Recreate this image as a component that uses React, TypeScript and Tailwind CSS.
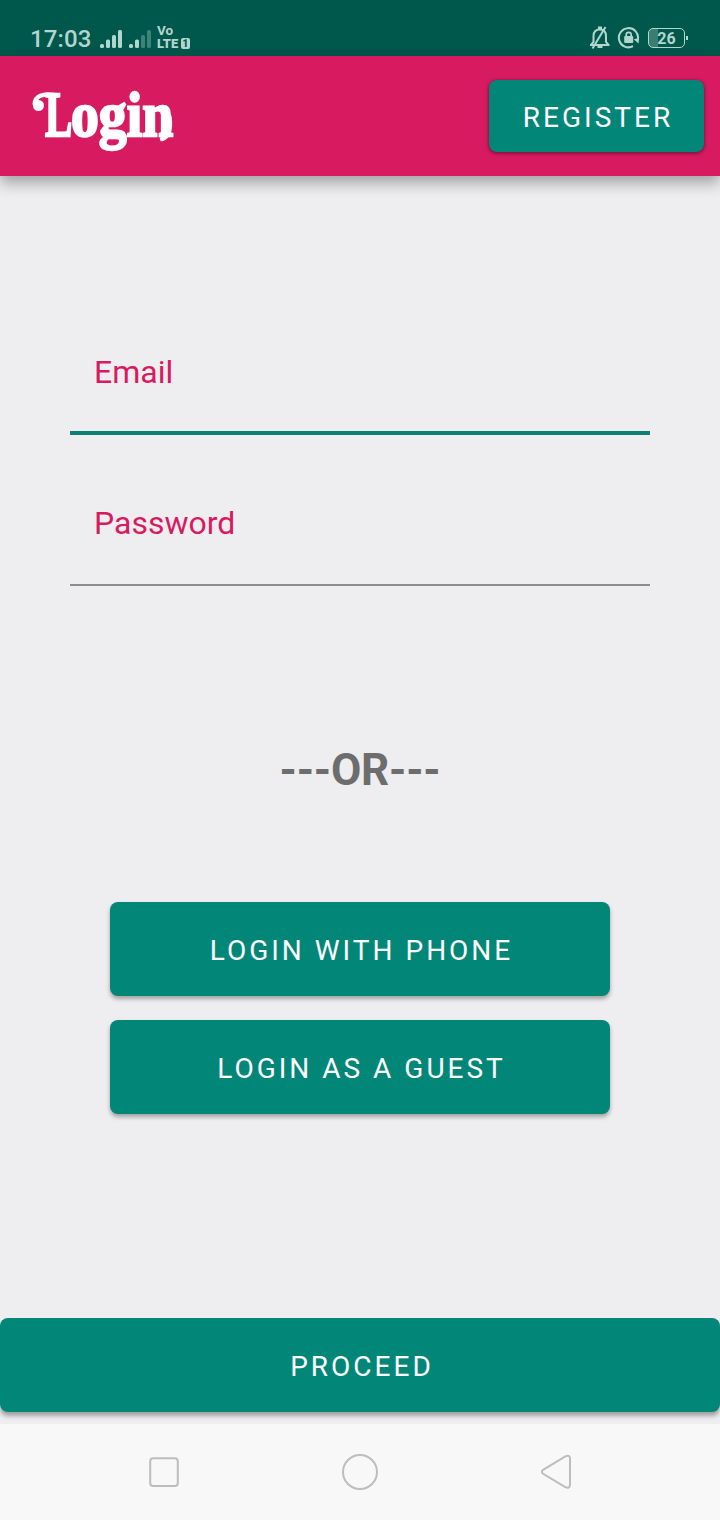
import React from "react";

const BUTTON =
  "flex items-center justify-center rounded-[8px] bg-[#028678] font-normal text-[28px] leading-[32px] tracking-[3px] text-white";

function StatusBar() {
  return (
    <header className="flex h-14 shrink-0 items-start justify-between bg-[#00574b] text-[#b2d5ce]">
      <div className="flex items-start pl-[30px]">
        <span className="mt-[25px] w-[70px] text-[24px] font-medium leading-7 tracking-[0.1px]">17:03</span>
        <svg className="mt-[28px]" width="52" height="20" viewBox="0 0 52 20" fill="currentColor">
          <rect x="0" y="16" width="4" height="4" rx="1.5" />
          <rect x="6" y="11.5" width="4" height="8.5" rx="1.5" />
          <rect x="12" y="7" width="4" height="13" rx="1.5" />
          <rect x="18" y="2" width="4" height="18" rx="1.5" />
          <rect x="29" y="16" width="4" height="4" rx="1.5" />
          <rect x="35" y="11.5" width="4" height="8.5" rx="1.5" />
          <g opacity="0.35">
            <rect x="41" y="7" width="4" height="13" rx="1.5" />
            <rect x="47" y="2" width="4" height="18" rx="1.5" />
          </g>
        </svg>
        <div className="ml-[5px] mt-[24px] text-[13.5px] font-black leading-[13px]">
          <div className="font-bold">Vo</div>
          <div className="flex items-center">
            <span className="w-[24px] origin-left scale-x-[0.96]">LTE</span>
            <span className="flex h-[11px] w-[9px] items-center justify-center rounded-[2px] bg-[#b2d5ce] text-[10px] leading-[11px] text-[#00574b]">
              1
            </span>
          </div>
        </div>
      </div>
      <div className="flex pr-[32px] pt-[25px]">
        <svg width="24" height="26" viewBox="0 0 24 26" fill="none" stroke="currentColor" strokeWidth="2">
          <path d="M2 20H21.5M3 19.8L5.5 16.8V11C5.5 6.8 7.8 4.4 11.8 4.4S18 6.8 18 11V16.8L20.5 19.8" />
          <path d="M11 4V2.6H13V4M9.5 22H14.5" />
          <path d="M17.5 2L4.5 23.5" />
        </svg>
        <svg className="ml-[5px]" width="24" height="26" viewBox="0 0 24 26">
          <path d="M16 21.2A9.6 9.6 0 1 1 21 14" fill="none" stroke="currentColor" strokeWidth="2" />
          <path d="M16.8 14.2L22 13L21.6 18.4Z" fill="currentColor" />
          <rect x="7.2" y="11" width="9" height="7" rx="1" fill="currentColor" />
          <path d="M9.2 12V9.8A2.5 2.5 0 0 1 14.2 9.8V12" fill="none" stroke="currentColor" strokeWidth="1.7" />
        </svg>
        <div className="ml-[7px] mt-[3px] flex h-5 items-center">
          <div className="flex h-5 w-[37px] items-center justify-center rounded-[5px] border border-[#b2d5ce] bg-[linear-gradient(90deg,#397d73_0,#397d73_9px,transparent_9px)] pt-px text-[16px] font-bold leading-none">
            26
          </div>
          <div className="ml-[1px] h-[4px] w-[2px] bg-[#b2d5ce]" />
        </div>
      </div>
    </header>
  );
}

function Wordmark() {
  return (
    <h1 className="relative ml-8 flex h-[80px] w-[150px] pl-[13px] font-['Liberation_Serif',serif] text-[64px] font-bold leading-[77px] text-white [-webkit-text-stroke:2.4px_white]">
      <span className="w-[26px] origin-left scale-x-[0.64]">L</span>
      <span className="w-[104px] origin-left scale-x-[0.87]">ogin</span>
      <svg className="absolute left-0 top-[15px]" width="150" height="54" viewBox="0 0 150 54" fill="none" stroke="white" strokeLinecap="round">
        <path d="M2.8 13C3 5 11 2 22 4" strokeWidth="4.5" />
        <circle cx="6.5" cy="14.5" r="5.5" fill="white" stroke="none" />
        <path d="M137.5 26C139 39 137 46 130 48" strokeWidth="4.5" />
      </svg>
    </h1>
  );
}

function Field({ label, active }: { label: string; active?: boolean }) {
  return (
    <label
      className={
        active
          ? "flex h-[112px] items-start border-b-4 border-[#0d8073] pl-6 pt-[29px]"
          : "flex h-[111px] items-start border-b-2 border-[#8d8d8f] pl-6 pt-[28px]"
      }
    >
      <span className="text-[32px] leading-10 text-[#d81b60]">{label}</span>
    </label>
  );
}

export default function App() {
  return (
    <div className="flex h-[1520px] w-[720px] flex-col overflow-hidden bg-[#eeeef0] font-[Roboto,sans-serif]">
      <StatusBar />
      <nav className="flex h-[120px] shrink-0 items-center justify-between bg-[#d81b60] pr-4 shadow-[0_7px_14px_rgba(0,0,0,0.32)]">
        <Wordmark />
        <button className={`${BUTTON} h-[72px] w-[215px] pl-[3px] pt-[3px] shadow-[0_1px_4px_rgba(0,0,0,0.55)]`}>REGISTER</button>
      </nav>
      <main className="flex grow flex-col">
        <form className="mt-[147px] flex flex-col gap-10 px-[70px]">
          <Field label="Email" active />
          <Field label="Password" />
        </form>
        <p className="mt-[156px] text-center text-[44px] font-bold leading-[56px] tracking-[-0.2px] text-[#6d6d6d]">---OR---</p>
        <div className="mt-[104px] flex flex-col gap-6 px-[110px]">
          <button className={`${BUTTON} h-[94px] pl-[3px] pt-[3px] shadow-[0_3px_4px_rgba(0,0,0,0.32)]`}>LOGIN WITH PHONE</button>
          <button className={`${BUTTON} h-[94px] pl-[3px] pt-[3px] shadow-[0_3px_4px_rgba(0,0,0,0.32)]`}>LOGIN AS A GUEST</button>
        </div>
        <button className={`${BUTTON} mb-3 mt-auto h-[94px] pl-[4px] pt-[3px] shadow-[0_4px_4px_rgba(0,0,0,0.32)]`}>PROCEED</button>
      </main>
      <footer className="flex h-24 shrink-0 items-center justify-between bg-[#f8f8f8] px-[144px]">
        <svg width="40" height="40" viewBox="0 0 40 40" fill="none" stroke="#bdbdbd" strokeWidth="2">
          <rect x="6.2" y="6.3" width="27.6" height="27.6" rx="3" />
        </svg>
        <svg width="40" height="40" viewBox="0 0 40 40" fill="none" stroke="#bdbdbd" strokeWidth="2">
          <circle cx="20" cy="20" r="17" />
        </svg>
        <svg width="40" height="40" viewBox="0 0 40 40" fill="none" stroke="#bdbdbd" strokeWidth="2">
          <path d="M7.1 17.8L29.3 4.4Q33.8 2.4 34 6.4V32.9Q33.8 37 29.3 35L7.1 21.8Q4.6 19.8 7.1 17.8Z" />
        </svg>
      </footer>
    </div>
  );
}
